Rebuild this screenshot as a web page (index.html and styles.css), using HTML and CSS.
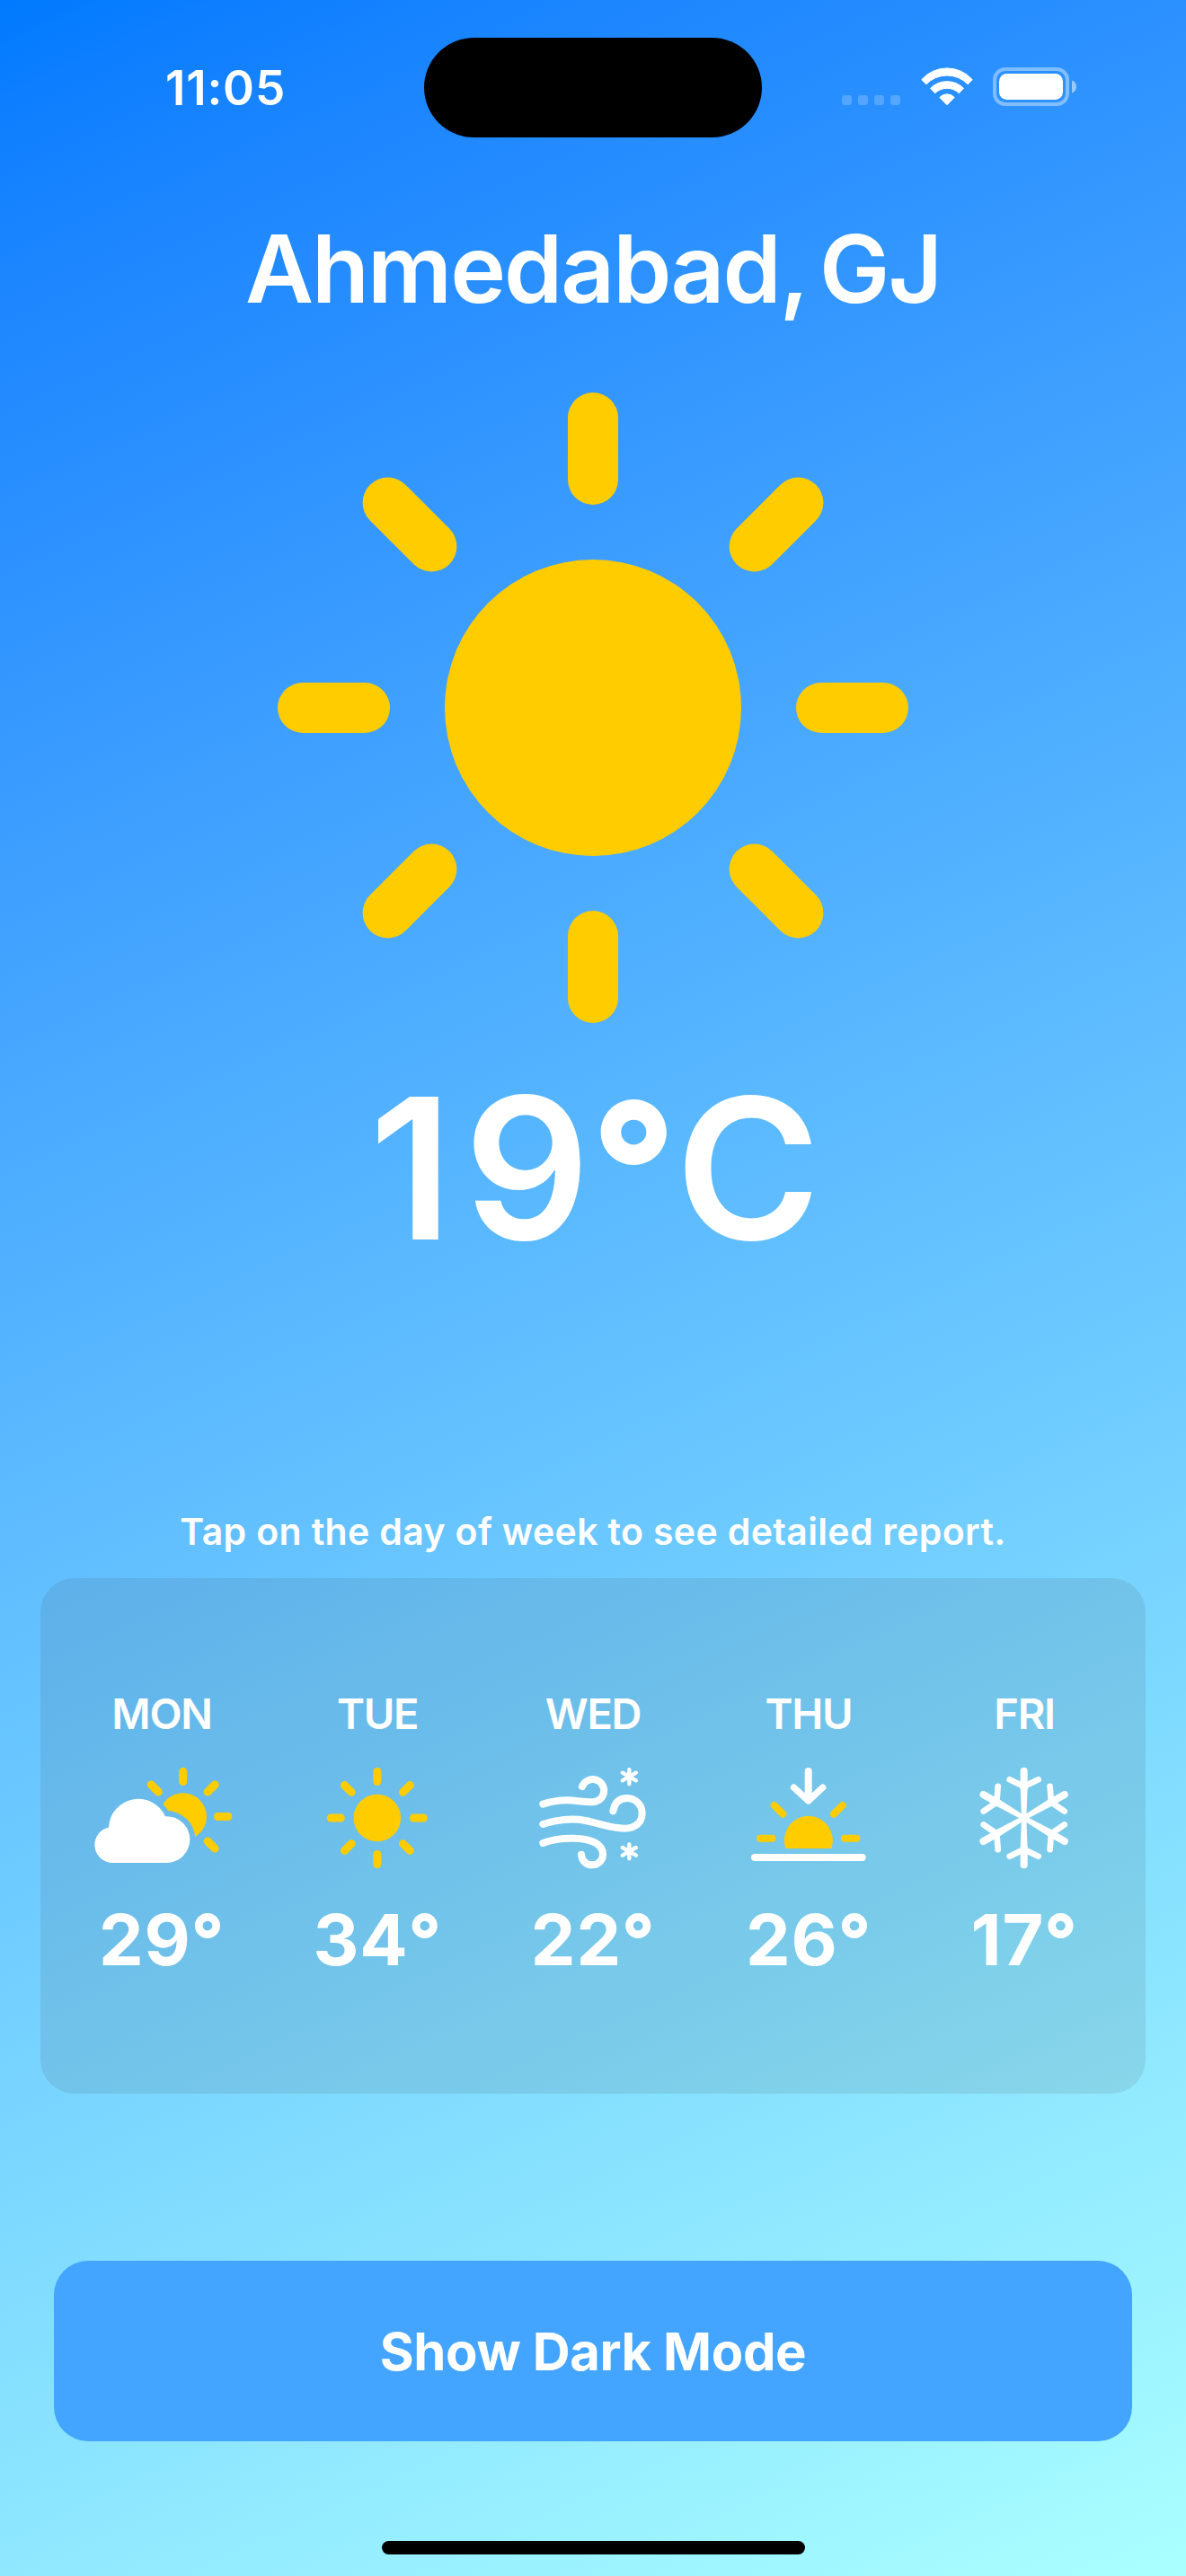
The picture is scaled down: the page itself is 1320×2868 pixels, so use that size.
FILE: index.html
```html
<!DOCTYPE html>
<html lang="en">
<head>
<meta charset="utf-8">
<title>Weather</title>
<link rel="stylesheet" href="styles.css">
</head>
<body>
<main class="screen">
  <header class="status">
    <div class="status-time"><span>11:05</span></div>
    <div class="island"></div>
    <div class="status-icons">
      <svg class="cellular" viewBox="0 0 65 11"><rect width="11" height="11" rx="3.2"/><rect x="18" width="11" height="11" rx="3.2"/><rect x="36" width="11" height="11" rx="3.2"/><rect x="54" width="11" height="11" rx="3.2"/></svg>
      <svg class="wifi" viewBox="-29 -42.5 58 43">
        <path d="M-28.2-28.8A37.5 37.5 0 0 1 28.2-28.8L23.2-23.7A32.4 32.4 0 0 0-23.2-23.7Z"/>
        <path d="M-18.4-19.2A25.9 25.9 0 0 1 18.4-19.2L13.4-13.8A19.4 19.4 0 0 0-13.4-13.8Z"/>
        <path d="M-8.2-9A11 11 0 0 1 8.2-9L0-.7Z"/>
      </svg>
      <svg class="battery" viewBox="0 0 93 43">
        <rect class="battery-shell" x="2" y="2" width="81" height="39" rx="12"/>
        <rect x="7" y="7" width="71" height="29" rx="8.5"/>
        <path class="battery-tip" d="M88 14.5C91 15.6 93 18 93 21.5S91 27.4 88 28.5Z"/>
      </svg>
    </div>
  </header>

  <h1 class="city">Ahmedabad, GJ</h1>

  <svg class="hero" viewBox="-351 -351 702 702">
    <circle r="165"/>
    <path d="M0-323V-254"/>
    <path d="M0-323V-254" transform="rotate(45)"/>
    <path d="M0-323V-254" transform="rotate(90)"/>
    <path d="M0-323V-254" transform="rotate(135)"/>
    <path d="M0-323V-254" transform="rotate(180)"/>
    <path d="M0-323V-254" transform="rotate(225)"/>
    <path d="M0-323V-254" transform="rotate(270)"/>
    <path d="M0-323V-254" transform="rotate(315)"/>
  </svg>

  <p class="temperature"><span class="lead">1</span>9<span class="degree">°</span>C</p>

  <p class="hint">Tap on the day of week to see detailed report.</p>

  <section class="forecast">
    <article class="day">
      <h2 class="day-name">MON</h2>
      <svg class="day-icon" viewBox="30 84 480 336">
        <mask id="cloud-gap">
          <rect x="0" y="0" width="600" height="480" fill="#fff"/>
          <circle cx="192" cy="289" r="117" fill="#000"/>
          <circle cx="286" cy="324" r="96" fill="#000"/>
        </mask>
        <circle class="sun" cx="341" cy="247.5" r="79" mask="url(#cloud-gap)"/>
        <g class="ray" transform="translate(341 247.5)">
          <path d="M0-150.5V-116.5"/>
          <path d="M0-150.5V-116.5" transform="rotate(45)"/>
          <path d="M0-150.5V-116.5" transform="rotate(90)"/>
          <path d="M0-150.5V-116.5" transform="rotate(135)"/>
          <path d="M0-150.5V-116.5" transform="rotate(-45)"/>
        </g>
        <path class="solid" d="M108 402A60 60 0 0 1 93 283.5A99 99 0 0 1 282 246.5A78 78 0 0 1 364 324A78 78 0 0 1 286 402Z"/>
      </svg>
      <p class="day-temp">29<span class="degree">°</span></p>
    </article>
    <article class="day">
      <h2 class="day-name">TUE</h2>
      <svg class="day-icon" viewBox="0 84 480 336">
        <circle class="sun" cx="239.5" cy="252" r="79"/>
        <g class="ray" transform="translate(239.5 252)">
          <path d="M0-154.5V-121.5"/>
          <path d="M0-154.5V-121.5" transform="rotate(45)"/>
          <path d="M0-154.5V-121.5" transform="rotate(90)"/>
          <path d="M0-154.5V-121.5" transform="rotate(135)"/>
          <path d="M0-154.5V-121.5" transform="rotate(180)"/>
          <path d="M0-154.5V-121.5" transform="rotate(225)"/>
          <path d="M0-154.5V-121.5" transform="rotate(270)"/>
          <path d="M0-154.5V-121.5" transform="rotate(315)"/>
        </g>
      </svg>
      <p class="day-temp">34<span class="degree">°</span></p>
    </article>
    <article class="day">
      <h2 class="day-name">WED</h2>
      <svg class="day-icon" viewBox="0 84 480 336">
        <g class="line">
          <path d="M73 206C110 194 155 191 185 195C205 197 222 199 239 198.5A37.6 37.6 0 1 0 204 147"/>
          <path d="M73 273C115 258 170 252 215 261C260 270 300 286 345 287C382 287 404 267 404 236A50 50 0 0 0 354 186C327 186 312 203 307 229"/>
          <path d="M73 336C105 323 150 319.5 175 320C240 321 273 342 273 374A35 35 0 0 1 238 409C216 409 203 396 201 374"/>
        </g>
        <path class="flake" d="M361 90.500V138.500M338.500 101L383.500 127M383.500 101L338.500 127M361 340V388M338.500 351L383.500 377M383.500 351L338.500 377"/>
      </svg>
      <p class="day-temp">22<span class="degree">°</span></p>
    </article>
    <article class="day">
      <h2 class="day-name">THU</h2>
      <svg class="day-icon" viewBox="0 84 480 336">
        <g class="line">
          <path d="M239 96V190M60 384H419"/>
          <path class="arrowhead" d="M190.500 150.500L239 195L287 150.500"/>
        </g>
        <path class="sun" d="M167 354Q163 354 162 350A81 81 0 1 1 317 350Q316 354 312 354Z"/>
        <path class="ray dusk" d="M78.500 320.500H118.500M360 320.500H400M125 210L154 239M353 210L324 239"/>
      </svg>
      <p class="day-temp">26<span class="degree">°</span></p>
    </article>
    <article class="day">
      <h2 class="day-name">FRI</h2>
      <svg class="day-icon" viewBox="0 84 480 336">
        <defs>
          <g id="arm">
            <path class="line" d="M0-156.500V-100"/>
            <path class="solid" d="M-12-103H12L8 0H-8Z"/>
            <path class="twig" d="M-48-128L0-105L48-128"/>
          </g>
        </defs>
        <g transform="translate(239 252)">
          <use href="#arm"/>
          <use href="#arm" transform="rotate(60)"/>
          <use href="#arm" transform="rotate(120)"/>
          <use href="#arm" transform="rotate(180)"/>
          <use href="#arm" transform="rotate(240)"/>
          <use href="#arm" transform="rotate(300)"/>
        </g>
      </svg>
      <p class="day-temp">17<span class="degree">°</span></p>
    </article>
  </section>

  <button class="mode-button" type="button">Show Dark Mode</button>

  <div class="home-indicator"></div>
</main>
</body>
</html>
```
FILE: styles.css
```css
* {
  box-sizing: border-box;
  margin: 0;
}

body {
  font-family: Inter, "Liberation Sans", sans-serif;
  color: #fff;
}

.screen {
  display: flex;
  flex-direction: column;
  align-items: center;
  width: 1320px;
  height: 2868px;
  overflow: hidden;
  background: linear-gradient(155.286deg, #007aff, #0f7fff 4%, #1e87ff 10%, #399bff 25%, #5fbdff 50%, #83deff 75%, #aaffff);
}

/* Status bar */
.status {
  display: grid;
  grid-template-columns: 472px 376px 472px;
  width: 100%;
  height: 111px;
  margin-top: 42px;
}

.status-time {
  display: flex;
  align-items: center;
  padding-left: 184px;
  font-size: 53px;
  font-weight: 600;
  letter-spacing: 0.8px;
}

.island {
  height: 111px;
  border-radius: 56px;
  background: #000;
}

.status-icons {
  display: flex;
  align-items: flex-start;
  padding: 33px 0 0 89px;
  fill: #fff;
}

.cellular {
  width: 65px;
  height: 11px;
  margin-top: 31px;
  opacity: 0.2;
}

.wifi {
  width: 58px;
  height: 43px;
  margin-left: 23px;
  stroke: #fff;
  stroke-width: 1;
  stroke-linejoin: round;
}

.battery {
  width: 93px;
  height: 43px;
  margin-left: 22px;
}

.battery-shell {
  fill: none;
  stroke: #fff;
  stroke-width: 4;
  opacity: 0.4;
}

.battery-tip {
  opacity: 0.5;
}

/* Current conditions */
.city {
  margin-top: 81px;
  font-size: 104.5px;
  font-weight: 600;
  line-height: 130px;
  letter-spacing: -2px;
  word-spacing: -9px;
  white-space: nowrap;
}

.hero {
  width: 702px;
  height: 702px;
  margin-top: 73px;
  fill: #fc0;
  stroke: #fc0;
  stroke-width: 56;
  stroke-linecap: round;
}

.hero circle {
  stroke: none;
}

.temperature {
  height: 240px;
  margin-top: 42px;
  padding-left: 8px;
  font-size: 219px;
  font-weight: 600;
  line-height: 240px;
  letter-spacing: 4px;
  white-space: nowrap;
}

.lead {
  margin-right: 9px;
}

.degree {
  font-weight: 800;
}

.temperature .degree {
  margin: 0 -5px 0 -3px;
  font-size: 206px;
  line-height: 1;
  vertical-align: 5px;
}

/* Forecast */
.hint {
  margin-top: 254px;
  font-size: 41px;
  font-weight: 600;
  line-height: 60px;
  letter-spacing: 0.35px;
  white-space: nowrap;
}

.forecast {
  display: grid;
  grid-template-columns: repeat(5, 240px);
  justify-content: center;
  width: 1230px;
  height: 574px;
  margin-top: 22px;
  padding-top: 121px;
  border-radius: 38px;
  background: rgba(64, 64, 64, 0.11);
}

.day {
  display: flex;
  flex-direction: column;
  align-items: center;
}

.day-name {
  font-size: 47px;
  font-weight: 580;
  line-height: 60px;
  letter-spacing: -1.3px;
}

.day-icon {
  width: 160px;
  height: 112px;
  margin-top: 30px;
  overflow: visible;
}

.day-temp {
  height: 100px;
  margin-top: 29px;
  font-size: 79px;
  font-weight: 700;
  line-height: 100px;
  letter-spacing: 0.8px;
}

.sun {
  fill: #fc0;
}

.solid {
  fill: #fff;
}

.ray {
  fill: none;
  stroke: #fc0;
  stroke-width: 27;
  stroke-linecap: round;
}

.dusk {
  stroke-width: 24;
}

.line,
.flake,
.twig {
  fill: none;
  stroke: #fff;
  stroke-width: 24;
  stroke-linecap: round;
  stroke-linejoin: round;
}

.arrowhead {
  stroke-width: 22;
}

.flake {
  stroke-width: 13;
}

.twig {
  stroke-width: 20;
}

/* Footer */
.mode-button {
  width: 1200px;
  height: 201px;
  margin-top: 186px;
  padding: 0;
  border: 0;
  border-radius: 38px;
  background: #43a5ff;
  color: #fff;
  font: 700 58px/70px Inter, "Liberation Sans", sans-serif;
  letter-spacing: -0.4px;
}

.home-indicator {
  width: 471px;
  height: 15px;
  margin-top: 111px;
  border-radius: 7.5px;
  background: #000;
}
```
